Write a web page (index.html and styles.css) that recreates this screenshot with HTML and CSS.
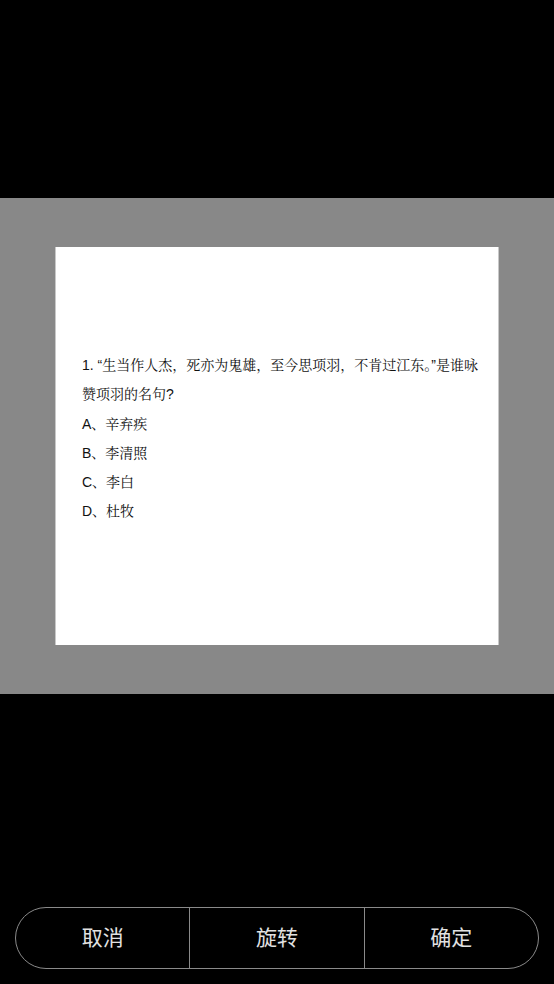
FILE: index.html
```html
<!DOCTYPE html>
<html lang="zh-CN">

<head>
  <meta charset="UTF-8">
  <meta name="viewport" content="width=device-width, initial-scale=1.0">
  <title>裁剪</title>
  <link rel="stylesheet" href="styles.css">
</head>

<body>
  <div class="page">
    <div class="stage">
      <div class="paper">
        <p class="question">1. “生当作人杰，死亦为鬼雄，至今思项羽，不肯过江东。”是谁咏赞项羽的名句?</p>
        <p>A、辛弃疾</p>
        <p>B、李清照</p>
        <p>C、李白</p>
        <p>D、杜牧</p>
      </div>
    </div>
    <div class="bar">
      <a href="javascript:;">取消</a>
      <a href="javascript:;">旋转</a>
      <a href="javascript:;">确定</a>
    </div>
  </div>
</body>

</html>
```

FILE: styles.css
```css
* {
  padding: 0;
  margin: 0;
  box-sizing: border-box;
}

a {
  text-decoration: none;
}

body {
  width: 554px;
  height: 984px;
  background-color: #000;
  font-family: "Noto Sans CJK SC", sans-serif;
}

.page {
  display: flex;
  flex-direction: column;
  height: 984px;
}

.stage {
  margin-top: 198px;
  height: 496px;
  padding-top: 49px;
  background-color: #888;
}

.paper {
  width: 444px;
  height: 398px;
  margin: 0 auto;
  padding: 104px 18px 0 26px;
  border-left: 1px solid #c8c8c8;
  border-right: 1px solid #c8c8c8;
  background-color: #fff;
  color: #111;
  font-family: "Liberation Sans", "Noto Serif CJK SC", "Noto Sans CJK SC", serif;
  font-size: 14px;
  line-height: 29.3px;
}

.bar {
  display: flex;
  height: 62px;
  margin: auto 15px 15px;
  border: 1px solid #8a8a8a;
  border-radius: 31px;
  overflow: hidden;
}

.bar a {
  flex: 1;
  text-align: center;
  line-height: 57px;
  font-size: 21px;
  color: #e2e2e2;
}

.bar a + a {
  border-left: 1px solid #8a8a8a;
}
```
